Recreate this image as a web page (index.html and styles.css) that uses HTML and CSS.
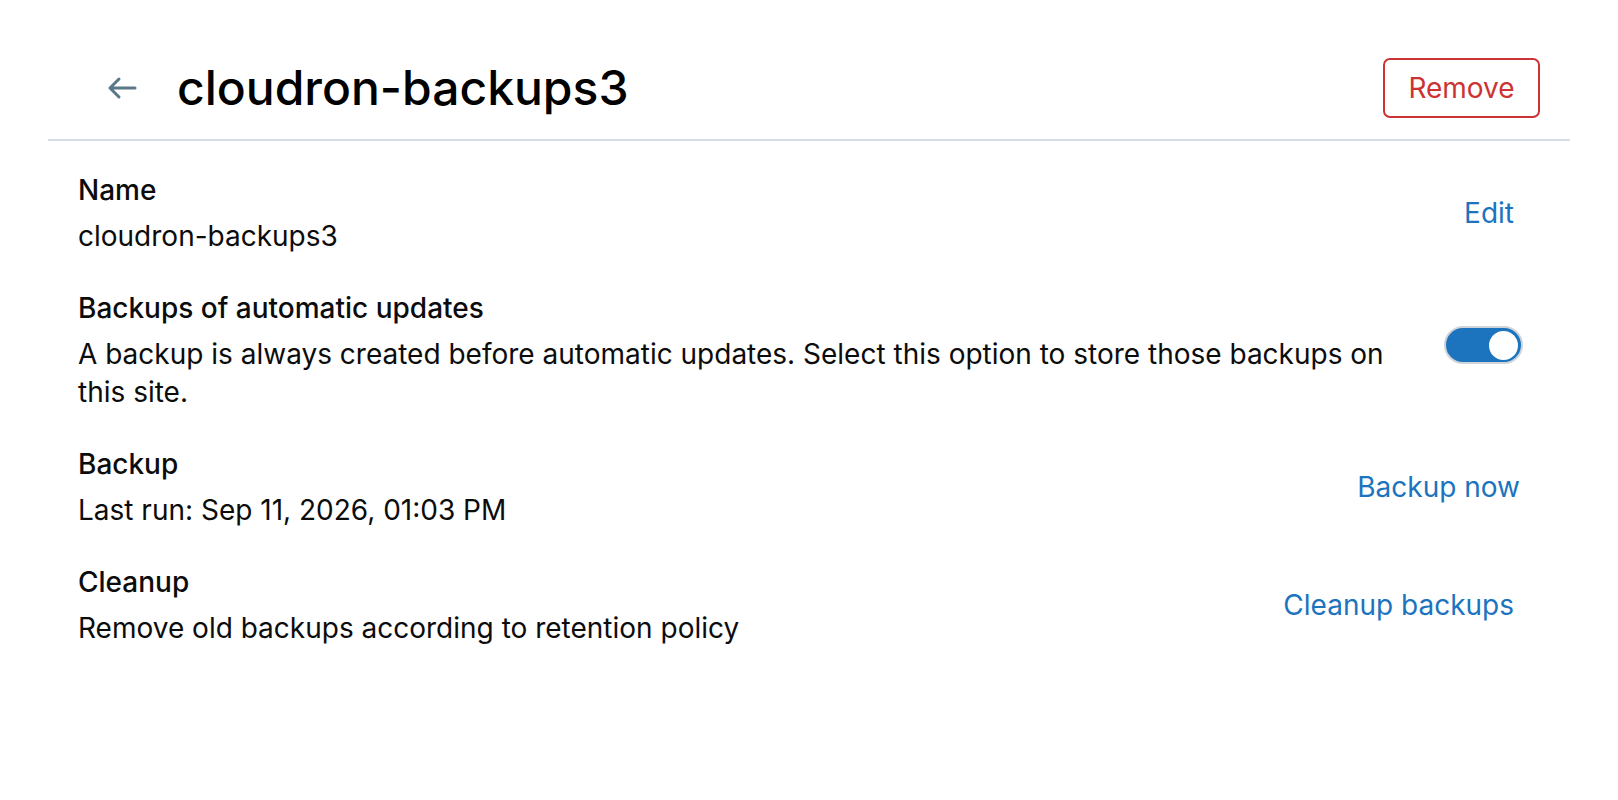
FILE: index.html
```html
<!DOCTYPE html>
<html lang="en">
<head>
<meta charset="utf-8">
<title>cloudron-backups3</title>
<link rel="stylesheet" href="styles.css">
</head>
<body>
<div class="page">
  <header class="head">
    <a class="back" href="#" aria-label="Back">
      <svg viewBox="0 0 30 24" width="30" height="24" fill="none" stroke="currentColor" stroke-width="3" stroke-linecap="round" stroke-linejoin="round"><path d="M28 12H3M12 3L3 12l9 9"/></svg>
    </a>
    <h1 class="title">cloudron-backups3</h1>
    <button class="btn-remove" type="button">Remove</button>
  </header>
  <div class="rows">
    <div class="row">
      <div class="info">
        <div class="label">Name</div>
        <div class="value">cloudron-backups3</div>
      </div>
      <a class="action" href="#">Edit</a>
    </div>
    <div class="row">
      <div class="info">
        <div class="label">Backups of automatic updates</div>
        <div class="value">A backup is always created before automatic updates. Select this option to store those backups on this site.</div>
      </div>
      <span class="toggle on"><span class="knob"></span></span>
    </div>
    <div class="row">
      <div class="info">
        <div class="label">Backup</div>
        <div class="value">Last run: Sep 11, 2026, 01:03 PM</div>
      </div>
      <a class="action action-wide" href="#">Backup now</a>
    </div>
    <div class="row">
      <div class="info">
        <div class="label">Cleanup</div>
        <div class="value">Remove old backups according to retention policy</div>
      </div>
      <a class="action" href="#">Cleanup backups</a>
    </div>
  </div>
</div>
</body>
</html>
```

FILE: styles.css
```css
* { box-sizing: border-box; }
html, body { margin: 0; padding: 0; background: #ffffff; }
body {
  font-family: Inter, "Noto Sans", "Liberation Sans", sans-serif;
  color: #0c0c0c;
}
.page {
  margin: 0 48px;
}
.head {
  display: flex;
  align-items: center;
  padding: 58px 30px 21px 59px;
  border-bottom: 2px solid #d8dce6;
}
.back {
  display: flex;
  align-items: center;
  color: #5b7889;
  width: 30px;
  margin-right: 40px;
}
.title {
  flex: 1;
  margin: 0;
  font-size: 48px;
  font-weight: 500;
  line-height: 60px;
  color: #000;
}
.btn-remove {
  font-family: inherit;
  height: 60px;
  width: 157px;
  border: 2px solid #cc3333;
  border-radius: 7px;
  background: #fff;
  color: #cc3333;
  font-size: 28px;
  padding: 0;
}
.rows {
  display: flex;
  flex-direction: column;
  gap: 34px;
  padding: 30px 0 0 30px;
}
.row {
  display: flex;
  align-items: center;
  gap: 40px;
}
.info {
  flex: 1;
  font-size: 28px;
  line-height: 38px;
}
.label {
  font-weight: 500;
  margin-bottom: 8px;
}
.action {
  color: #1b74bd;
  text-decoration: none;
  font-size: 28px;
  margin-right: 56px;
}
.action-wide {
  margin-right: 50px;
}
.toggle {
  width: 79px;
  height: 38px;
  border-radius: 19px;
  background: #1b74bd;
  border: 2px solid #cfd4da;
  display: flex;
  align-items: center;
  justify-content: flex-end;
  padding-right: 3px;
  margin-right: 47px;
  margin-top: -10px;
}
.knob {
  width: 29px;
  height: 29px;
  border-radius: 50%;
  background: #fff;
}
```
